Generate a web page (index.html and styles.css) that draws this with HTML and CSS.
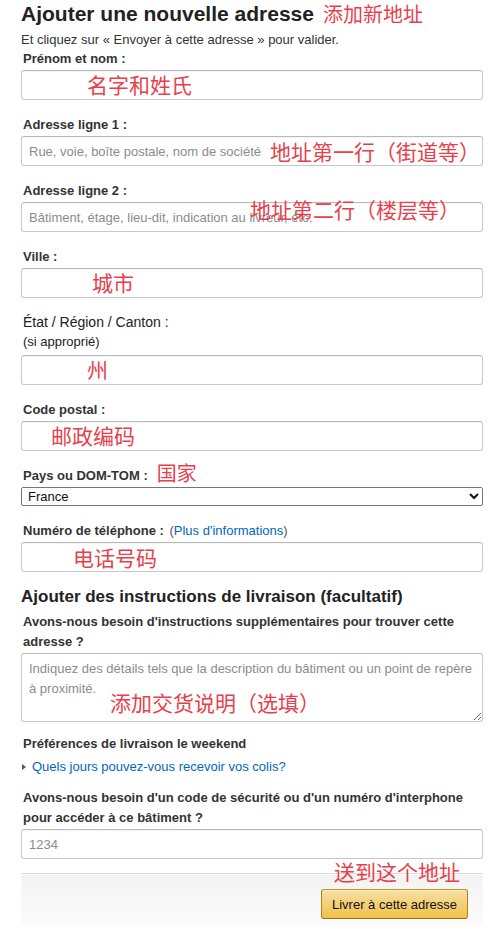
FILE: index.html
```html
<!DOCTYPE html>
<html lang="fr">
<head>
<meta charset="utf-8">
<title>Ajouter une nouvelle adresse</title>
<link rel="stylesheet" href="styles.css">
</head>
<body>
<div class="page">
  <h1 class="title">Ajouter une nouvelle adresse<span class="note note-inline note-title">添加新地址</span></h1>
  <p class="intro">Et cliquez sur « Envoyer à cette adresse » pour valider.</p>

  <div class="field">
    <label class="label">Prénom et nom :</label>
    <div class="control">
      <input class="input" type="text">
      <span class="note note-name">名字和姓氏</span>
    </div>
  </div>

  <div class="field">
    <label class="label">Adresse ligne 1 :</label>
    <div class="control">
      <input class="input" type="text" placeholder="Rue, voie, boîte postale, nom de société">
      <span class="note note-addr1">地址第一行（街道等）</span>
    </div>
  </div>

  <div class="field">
    <label class="label">Adresse ligne 2 :</label>
    <div class="control">
      <input class="input" type="text" placeholder="Bâtiment, étage, lieu-dit, indication au livreur, etc.">
      <span class="note note-addr2">地址第二行（楼层等）</span>
    </div>
  </div>

  <div class="field">
    <label class="label">Ville :</label>
    <div class="control">
      <input class="input" type="text">
      <span class="note note-city">城市</span>
    </div>
  </div>

  <div class="field">
    <label class="label label-light">État / Région / Canton :</label>
    <div class="sublabel">(si approprié)</div>
    <div class="control">
      <input class="input" type="text">
      <span class="note note-state">州</span>
    </div>
  </div>

  <div class="field">
    <label class="label">Code postal :</label>
    <div class="control">
      <input class="input" type="text">
      <span class="note note-zip">邮政编码</span>
    </div>
  </div>

  <div class="field">
    <label class="label">Pays ou DOM-TOM :<span class="note note-inline note-country">国家</span></label>
    <select class="select">
      <option>France</option>
    </select>
  </div>

  <div class="field field-phone">
    <label class="label">Numéro de téléphone : <span class="more">(<a class="link" href="#">Plus d'informations</a>)</span></label>
    <div class="control">
      <input class="input" type="text">
      <span class="note note-phone">电话号码</span>
    </div>
  </div>

  <h2 class="subtitle">Ajouter des instructions de livraison (facultatif)</h2>

  <div class="question">Avons-nous besoin d'instructions supplémentaires pour trouver cette adresse ?</div>
  <div class="control">
    <textarea class="textarea" placeholder="Indiquez des détails tels que la description du bâtiment ou un point de repère à proximité."></textarea>
    <span class="note note-instr">添加交货说明（选填）</span>
  </div>

  <div class="weekend">Préférences de livraison le weekend</div>
  <div class="expander"><span class="caret"></span><a class="link" href="#">Quels jours pouvez-vous recevoir vos colis?</a></div>

  <div class="question question-code">Avons-nous besoin d'un code de sécurité ou d'un numéro d'interphone pour accéder à ce bâtiment ?</div>
  <input class="input" type="text" placeholder="1234">

  <div class="footer">
    <span class="note note-submit">送到这个地址</span>
    <button class="button" type="button">Livrer à cette adresse</button>
  </div>
</div>
</body>
</html>
```
FILE: styles.css
```css
html, body {
  margin: 0;
  padding: 0;
  background: #fff;
}

body {
  font-family: "Liberation Sans", Arial, sans-serif;
  color: #111;
  font-size: 13px;
}

.page {
  width: 462px;
  padding: 0 21px;
}

.title {
  margin: 0;
  padding-top: 2px;
  font-size: 21px;
  line-height: 24px;
  font-weight: 700;
  color: #222;
  white-space: nowrap;
}

.intro {
  margin: 6px 0 0;
  font-size: 13px;
  line-height: 16px;
  color: #333;
}

.field {
  margin-top: 1px;
  margin-bottom: 15px;
}

.label {
  display: block;
  padding-left: 2px;
  font-size: 13px;
  line-height: 19px;
  font-weight: 700;
  color: #333;
  margin-bottom: 2px;
}

.label-light {
  font-size: 14px;
  font-weight: 400;
  color: #222;
  margin-bottom: 0;
}

.sublabel {
  padding-left: 2px;
  font-size: 13px;
  line-height: 19px;
  color: #222;
  margin-bottom: 4px;
}

.more {
  font-weight: 400;
  color: #555;
  margin-left: 2px;
}

.link {
  color: #0066c0;
  text-decoration: none;
}

.control {
  position: relative;
}

.input {
  display: block;
  box-sizing: border-box;
  width: 462px;
  height: 30px;
  margin: 0;
  padding: 3px 7px;
  border: 1px solid #c8c8c8;
  border-top-color: #b9b9b9;
  border-radius: 3px;
  box-shadow: 0 1px 0 rgba(0, 0, 0, 0.04) inset;
  font-family: "Liberation Sans", Arial, sans-serif;
  font-size: 13px;
  color: #111;
  background: #fff;
  outline: none;
}

.input::placeholder,
.textarea::placeholder {
  color: #8c8c8c;
}

.select {
  display: block;
  box-sizing: border-box;
  width: 462px;
  height: 19px;
  margin: 0;
  padding: 0 2px;
  border: 1px solid #767676;
  border-radius: 2px;
  font-family: "Liberation Sans", Arial, sans-serif;
  font-size: 13px;
  color: #111;
  background: #fff;
}

.subtitle {
  margin: 15px 0 5px;
  font-size: 17px;
  line-height: 20px;
  font-weight: 700;
  color: #222;
}

.question {
  padding-left: 2px;
  font-size: 13px;
  line-height: 20px;
  font-weight: 700;
  color: #333;
  margin-bottom: 1px;
}

.textarea {
  display: block;
  box-sizing: border-box;
  width: 462px;
  height: 69px;
  margin: 0;
  padding: 5px 7px;
  border: 1px solid #c8c8c8;
  border-top-color: #b9b9b9;
  border-radius: 3px;
  font-family: "Liberation Sans", Arial, sans-serif;
  font-size: 13px;
  line-height: 20px;
  color: #111;
  resize: vertical;
  outline: none;
}

.weekend {
  margin-top: 12px;
  padding-left: 2px;
  font-size: 13px;
  line-height: 19px;
  font-weight: 700;
  color: #333;
}

.expander {
  margin-top: 4px;
  line-height: 19px;
  font-size: 13px;
  display: flex;
  align-items: center;
}

.caret {
  display: inline-block;
  width: 0;
  height: 0;
  margin: 0 6px 0 1px;
  border-top: 3px solid transparent;
  border-bottom: 3px solid transparent;
  border-left: 4px solid #555;
}

.question-code {
  margin-top: 12px;
  margin-bottom: 1px;
}

.footer {
  position: relative;
  margin-top: 14px;
  height: 52px;
  box-sizing: border-box;
  padding: 15px 15px 0 0;
  display: flex;
  justify-content: flex-end;
  align-items: flex-start;
  border-top: 1px solid #dcdcdc;
  background: linear-gradient(#f3f3f3, #fbfbfb);
  box-shadow: inset 0 1px 0 #fff;
}

.button {
  box-sizing: border-box;
  width: 147px;
  height: 30px;
  margin: 0;
  padding: 0;
  border: 1px solid #a88734;
  border-color: #c89411 #b0820f #99710d;
  border-radius: 3px;
  background: linear-gradient(#f7dfa5, #f0c14b);
  box-shadow: 0 1px 0 rgba(255, 255, 255, 0.4) inset;
  font-family: "Liberation Sans", Arial, sans-serif;
  font-size: 13px;
  color: #111;
  cursor: pointer;
}

/* red annotations */
.note {
  position: absolute;
  font-family: "Noto Sans CJK SC", "Noto Sans CJK JP", sans-serif;
  font-weight: 400;
  font-size: 21px;
  line-height: 21px;
  color: #e8404a;
  white-space: nowrap;
  pointer-events: none;
}

.note-inline {
  position: static;
  display: inline-block;
  vertical-align: -1px;
  line-height: 20px;
}

.note-title {
  margin-left: 9px;
  font-size: 20px;
}

.note-country {
  margin-left: 9px;
  font-weight: 400;
  font-size: 20px;
  line-height: 19px;
  vertical-align: top;
  margin-top: -3px;
}

.note-name { left: 66px; top: 4px; }
.note-addr1 { left: 249px; top: 5px; }
.note-addr2 { left: 229px; top: -3px; }
.note-city { left: 71px; top: 4px; }
.note-state { left: 66px; top: 4px; }
.note-zip { left: 30px; top: 4px; }
.note-phone { left: 52px; top: 5px; }
.note-instr { left: 89px; top: 39px; }
.note-submit { left: 313px; top: -13px; }
```
